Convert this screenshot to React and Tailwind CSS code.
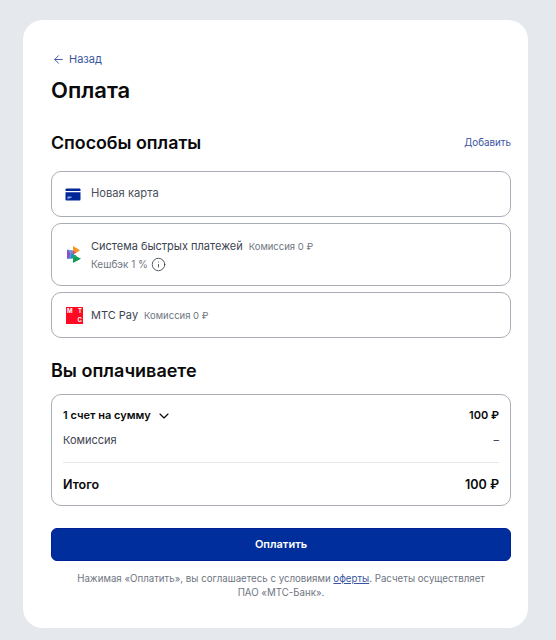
import React from 'react';
import { ArrowLeft, ChevronDown, Info } from 'lucide-react';

const font = { fontFamily: 'Inter, "Noto Sans", sans-serif' };

const CardIcon = () => (
  <svg width="16" height="13" viewBox="0 0 16 13">
    <path d="M1.500 0.500h13a1 1 0 0 1 1 1v1.500H0.500V1.500a1 1 0 0 1 1-1z" fill="#00279a" />
    <path d="M0.500 4.200h15v7.300a1 1 0 0 1-1 1h-13a1 1 0 0 1-1-1z" fill="#00279a" />
    <rect x="2.500" y="8.500" width="4" height="1.500" fill="#8fa5dc" />
    <rect x="2.500" y="10.300" width="2" height="0.800" fill="#8fa5dc" />
  </svg>
);

const SbpIcon = () => (
  <svg width="15" height="17" viewBox="0 0 15 17" className="ml-[2px]">
    <path d="M6 0l7 4.200-3.300 2.200L6 4.200z" fill="#f7941d" />
    <path d="M6 0v4.200l3.700 2.200L6 8.500z" fill="#ef4b36" />
    <path d="M0 3.500l6 5v-4z" fill="#5b8ee6" />
    <path d="M0 3.500v9.500l3.500-2V6.500z" fill="#8a4fc8" />
    <path d="M3.500 6.500L9.700 10 6 12.500 0 13l3.500-2z" fill="#1f8ad6" />
    <path d="M6 8.500l8 4.300L6 17z" fill="#0f9d58" />
    <path d="M6 12.500L9.700 10.300 6 8.500z" fill="#2ba84a" />
  </svg>
);

const MtsIcon = () => (
  <div className="ml-[1px] flex h-[17px] w-[17px] flex-col justify-between bg-[#ff0a22] px-[1px] py-[1px] text-[6px] font-bold leading-[6px] text-white">
    <div className="flex justify-between"><span>М</span><span>Т</span></div>
    <div className="text-right">С</div>
  </div>
);

function MethodRow({ icon, children, className }) {
  return (
    <div className={`flex items-center rounded-[10px] border border-[#a9aeb6] pl-[13px] ${className}`}>
      <div className="flex w-[26px] shrink-0 items-center">{icon}</div>
      <div>{children}</div>
    </div>
  );
}

export default function App() {
  return (
    <div style={font} className="min-h-[640px] bg-[#e5e9ee] pl-[23px] pr-[28px] pt-[20px] pb-[12px]">
      <div className="h-[608px] rounded-[20px] bg-white pl-[28px] pr-[17px] pt-[32px]">
        <a className="flex h-[14px] items-center gap-[4px] text-[11px] text-[#3a55a0]">
          <ArrowLeft size={13} strokeWidth={1.75} className="ml-[1px]" />
          Назад
        </a>
        <h1 className="mt-[10px] text-[22px] font-semibold leading-[28px] text-[#0a0a0a]">Оплата</h1>

        <div className="mt-[25px] flex items-center justify-between">
          <h2 className="text-[17.800px] font-semibold leading-[28px] text-[#0a0a0a]">Способы оплаты</h2>
          <a className="text-[9.800px] text-[#3a55a0]">Добавить</a>
        </div>

        <div className="mt-[14px] flex flex-col gap-[6px]">
          <MethodRow icon={<CardIcon />} className="h-[46px]">
            <span className="mb-[1px] block text-[11.200px] text-[#4a505c]">Новая карта</span>
          </MethodRow>
          <MethodRow icon={<SbpIcon />} className="h-[63px]">
            <div className="flex items-baseline gap-[6px] pt-[1px]">
              <span className="text-[11px] text-[#3d4450]">Система быстрых платежей</span>
              <span className="text-[9.500px] text-[#6f7682]">Комиссия 0 ₽</span>
            </div>
            <div className="mt-[2px] flex items-center gap-[3px] text-[10px] text-[#6f7682]">
              Кешбэк 1 %
              <Info size={15} strokeWidth={1.25} className="text-[#2a2f38]" />
            </div>
          </MethodRow>
          <MethodRow icon={<MtsIcon />} className="h-[46px]">
            <div className="flex items-baseline gap-[6px]">
              <span className="text-[11px] text-[#3d4450]">МТС Pay</span>
              <span className="text-[9.500px] text-[#6f7682]">Комиссия 0 ₽</span>
            </div>
          </MethodRow>
        </div>

        <h2 className="mt-[19px] text-[18px] font-semibold leading-[28px] text-[#0a0a0a]">Вы оплачиваете</h2>

        <div className="mt-[9px] h-[112px] rounded-[10px] border border-[#a9aeb6] px-[11px]">
          <div className="flex h-[38px] items-center justify-between pt-[3px] text-[11px] font-semibold text-[#0a0a0a]">
            <span className="flex items-center gap-[5px]">
              1 счет на сумму
              <ChevronDown size={16} strokeWidth={1.75} />
            </span>
            <span>100 ₽</span>
          </div>
          <div className="flex h-[14px] items-center justify-between text-[11px] text-[#3d4450]">
            <span>Комиссия</span>
            <span>–</span>
          </div>
          <div className="mt-[15px] border-t border-[#e5e7eb]" />
          <div className="flex h-[44px] items-center justify-between text-[12.500px] font-semibold text-[#0a0a0a]">
            <span>Итого</span>
            <span>100 ₽</span>
          </div>
        </div>

        <button className="mt-[22px] h-[33px] w-full rounded-[6px] border border-[#00209a] bg-[#002e9c] text-[11px] font-semibold text-white">
          Оплатить
        </button>

        <p className="mt-[11px] text-center text-[9.700px] leading-[14px] text-[#6f7682]">
          Нажимая «Оплатить», вы соглашаетесь с условиями <a className="text-[#3a55a0] underline">оферты</a>. Расчеты осуществляет
          <br />
          ПАО «МТС-Банк».
        </p>
      </div>
    </div>
  );
}
